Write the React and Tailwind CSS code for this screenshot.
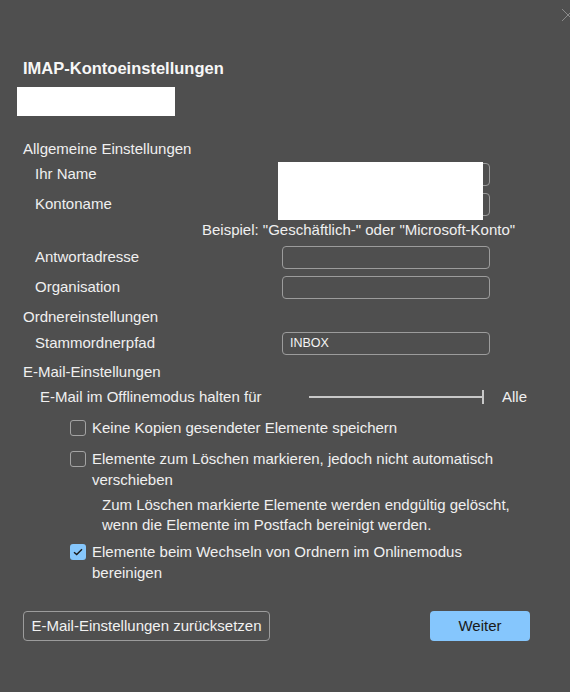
import React from 'react'

const font = { fontFamily: '"Liberation Sans", Arial, sans-serif' }

const Field = ({ label, value }) => (
    <div className="flex items-center h-[30px]">
        <div className="w-[259px] pl-[12px] text-[15px] text-[#f0f0f0]">{label}</div>
        <div className="w-[208px] h-[23px] rounded-[4px] border border-[#9c9c9c] flex items-center px-[7px] text-[12.5px] text-[#f4f4f4]">
            {value}
        </div>
    </div>
)

const Check = ({ checked, children }) => (
    <div className="flex items-start pl-[47px] text-[15px] leading-[21px] text-[#f0f0f0]">
        {checked ? (
            <div className="mt-[2.5px] w-[16px] h-[16px] shrink-0 rounded-[3px] bg-[#86c7fc] flex items-center justify-center">
                <svg width="10" height="8" viewBox="0 0 10 8" fill="none">
                    <path d="M1 4.2 L3.7 6.6 L9 1.2" stroke="#1b1b1b" strokeWidth="1.4" />
                </svg>
            </div>
        ) : (
            <div className="mt-[2.5px] w-[16px] h-[16px] shrink-0 rounded-[3px] border border-[#a3a3a3]"></div>
        )}
        <div className="pl-[6px] w-[420px]">{children}</div>
    </div>
)

const App = () => {
    return (
        <div className="w-[570px] h-[692px] bg-[#4f4f4f] relative overflow-hidden" style={font}>
            {/* close glyph, mostly cut off at the right edge */}
            <svg className="absolute top-[8px] right-[-5px]" width="14" height="14" viewBox="0 0 14 14">
                <path d="M1 1 L13 13 M13 1 L1 13" stroke="#8a8a8a" strokeWidth="1" />
            </svg>

            <div className="flex flex-col pl-[23px] pt-[56px]">
                <h1 className="text-[16.5px] leading-[24px] font-bold text-[#f7f7f7]">IMAP-Kontoeinstellungen</h1>
                <div className="ml-[-6px] mt-[7px] w-[158px] h-[29px] bg-white"></div>

                <div className="mt-[23px] h-[20px] leading-[20px] text-[15px] text-[#f0f0f0]">Allgemeine Einstellungen</div>
                <div className="relative">
                    <Field label="Ihr Name" />
                    <Field label="Kontoname" />
                    <div className="absolute left-[255px] top-[3px] w-[205px] h-[58px] bg-white"></div>
                </div>
                <div className="pl-[179px] h-[20px] leading-[20px] text-[15px] text-[#f0f0f0] mt-[1px]">
                    Beispiel: "Geschäftlich-" oder "Microsoft-Konto"
                </div>
                <div className="mt-[2px]">
                    <Field label="Antwortadresse" />
                    <Field label="Organisation" />
                </div>

                <div className="mt-[5px] h-[20px] leading-[20px] text-[15px] text-[#f0f0f0]">Ordnereinstellungen</div>
                <div className="mt-[1px]">
                    <Field label="Stammordnerpfad" value="INBOX" />
                </div>

                <div className="mt-[4px] h-[20px] leading-[20px] text-[15px] text-[#f0f0f0]">E-Mail-Einstellungen</div>
                <div className="mt-[5px] h-[20px] flex items-center pl-[17px] text-[15px] text-[#f0f0f0]">
                    <div className="w-[269px]">E-Mail im Offlinemodus halten für</div>
                    <div className="w-[175px] h-[2px] bg-[#c8c8c8] relative">
                        <div className="absolute right-0 top-[-6px] w-[2px] h-[14px] bg-[#c8c8c8]"></div>
                    </div>
                    <div className="pl-[18px]">Alle</div>
                </div>

                <div className="mt-[10px]">
                    <Check>Keine Kopien gesendeter Elemente speichern</Check>
                </div>
                <div className="mt-[10px]">
                    <Check>Elemente zum Löschen markieren, jedoch nicht automatisch verschieben</Check>
                </div>
                <div className="mt-[5px] pl-[79px] w-[500px] text-[15px] leading-[20px] text-[#f0f0f0]">
                    Zum Löschen markierte Elemente werden endgültig gelöscht, wenn die Elemente im Postfach bereinigt werden.
                </div>
                <div className="mt-[6px]">
                    <Check checked>Elemente beim Wechseln von Ordnern im Onlinemodus bereinigen</Check>
                </div>

                <div className="mt-[28px] flex items-center">
                    <button className="w-[247px] h-[30px] rounded-[4px] border border-[#9c9c9c] text-[15px] text-[#f2f2f2]">
                        E-Mail-Einstellungen zurücksetzen
                    </button>
                    <button className="ml-[160px] w-[100px] h-[30px] rounded-[4px] bg-[#85c6fd] text-[15px] text-[#1a1a1a]">
                        Weiter
                    </button>
                </div>
            </div>
        </div>
    )
}

export default App
